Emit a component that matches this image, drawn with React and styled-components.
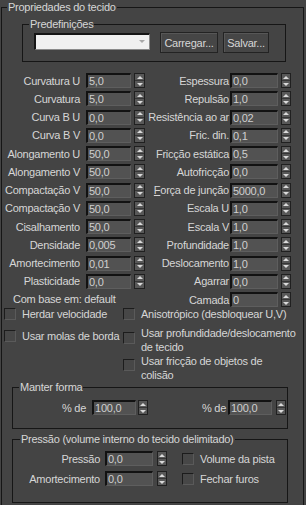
import React from "react";
import styled, { createGlobalStyle } from "styled-components";

const leftFields = [
  ["Curvatura U", "5,0"],
  ["Curvatura", "5,0"],
  ["Curva B U", "0,0"],
  ["Curva B V", "0,0"],
  ["Alongamento U", "50,0"],
  ["Alongamento V", "50,0"],
  ["Compactação V", "50,0"],
  ["Compactação V", "50,0"],
  ["Cisalhamento", "50,0"],
  ["Densidade", "0,005"],
  ["Amortecimento", "0,01"],
  ["Plasticidade", "0,0"],
];

// third item: index of the underlined access-key letter
const rightFields = [
  ["Espessura", "0,0"],
  ["Repulsão", "1,0"],
  ["Resistência ao ar", "0,02"],
  ["Fric. din.", "0,1"],
  ["Fricção estática", "0,5"],
  ["Autofricção", "0,0"],
  ["Força de junção", "5000,0", 0],
  ["Escala U", "1,0"],
  ["Escala V", "1,0"],
  ["Profundidade", "1,0"],
  ["Deslocamento", "1,0"],
  ["Agarrar", "0,0"],
  ["Camada", "0"],
];

function Spin({ gap = 3, w = 10 }) {
  return (
    <Spinner $gap={gap} $w={w}>
      <SpinHalf />
      <SpinHalf $down />
    </Spinner>
  );
}

function LabelText({ text, accel }) {
  if (accel === undefined) return text;
  return (
    <>
      {text.slice(0, accel)}
      <U>{text[accel]}</U>
      {text.slice(accel + 1)}
    </>
  );
}

function Field({ label, accel, value, labelW, gap, inputW, spinGap, spinW }) {
  return (
    <FieldRow>
      <Label $w={labelW} $gap={gap}>
        <span>
          <LabelText text={label} accel={accel} />
        </span>
      </Label>
      <NumInput $w={inputW} readOnly value={value} />
      <Spin gap={spinGap} w={spinW} />
    </FieldRow>
  );
}

function Check({ children, mt, boxTop }) {
  return (
    <CheckItem $mt={mt}>
      <Box $top={boxTop} />
      <span>{children}</span>
    </CheckItem>
  );
}

export default function App() {
  const left = leftFields.map(([l, v], i) => (
    <Field key={"l" + i} label={l} value={v} labelW={78} gap={6} inputW={45} spinGap={3} spinW={11} />
  ));
  const right = rightFields.map(([l, v, a], i) => (
    <Field key={"r" + i} label={l} accel={a} value={v} labelW={83} gap={1} inputW={48} spinGap={3} spinW={10} />
  ));
  const cells = [];
  for (let i = 0; i < 13; i++) {
    cells.push(left[i] || <Note key="note">Com base em: default</Note>);
    cells.push(right[i]);
  }

  return (
    <Panel>
      <GlobalStyle />
      <Group $width={303} $padding="0 0 2px 0">
        <Legend $indent={5}>Propriedades do tecido</Legend>

        <Group $width={264} $margin="3px 0 0 20px" $padding="1px 0 8px 0">
          <Legend $indent={6}>Predefinições</Legend>
          <PresetRow>
            <Dropdown />
            <Button $w={58} $ml={10}>Carregar...</Button>
            <Button $w={46} $ml={5}>Salvar...</Button>
          </PresetRow>
        </Group>

        <FieldGrid>{cells}</FieldGrid>

        <CheckGrid>
          <Check>Herdar velocidade</Check>
          <Check>Anisotrópico (desbloquear U,V)</Check>
          <Check mt={8}>Usar molas de borda</Check>
          <Check mt={5} boxTop={6}>
            Usar profundidade/deslocamento
            <br />
            de tecido
          </Check>
          <span />
          <Check boxTop={5}>
            Usar fricção de objetos de
            <br />
            colisão
          </Check>
        </CheckGrid>

        <Group $width={276} $margin="-2px 0 0 10px" $padding="6px 0 13px 0">
          <Legend $indent={6}>Manter forma</Legend>
          <ShapeRow>
            <FieldRow>
              <Label $gap={6}>% de</Label>
              <NumInput $w={44} readOnly value="100,0" />
              <Spin gap={2} />
            </FieldRow>
            <FieldRow>
              <Label $gap={2}>% de</Label>
              <NumInput $w={44} readOnly value="100,0" />
              <Spin gap={4} />
            </FieldRow>
          </ShapeRow>
        </Group>

        <Group $width={276} $margin="3px 0 0 10px" $padding="5px 0 16px 0">
          <Legend $indent={7}>Pressão (volume interno do tecido delimitado)</Legend>
          <PressRow>
            <Label $w={87} $gap={5}>Pressão</Label>
            <NumInput $w={48} readOnly value="0,0" />
            <Spin gap={4} />
            <Check boxTop={1}>Volume da pista</Check>
          </PressRow>
          <PressRow $mt={5}>
            <Label $w={87} $gap={5}>Amortecimento</Label>
            <NumInput $w={48} readOnly value="0,0" />
            <Spin gap={4} />
            <Check boxTop={1}>Fechar furos</Check>
          </PressRow>
        </Group>
      </Group>
    </Panel>
  );
}

const GlobalStyle = createGlobalStyle`
  * { box-sizing: border-box; }
  body {
    margin: 0;
    background: #444444;
    font-family: "Liberation Sans", Arial, sans-serif;
    font-size: 11px;
    letter-spacing: -0.25px;
    color: #d6d6d6;
  }
`;

const Panel = styled.div`
  width: 306px;
  height: 505px;
  background: #444444;
  overflow: hidden;
  padding-left: 1px;
`;

const Group = styled.fieldset`
  margin: ${(p) => p.$margin || "0"};
  padding: ${(p) => p.$padding || "0"};
  width: ${(p) => p.$width}px;
  border: 1px solid #161616;
  min-width: 0;
`;

const Legend = styled.legend`
  margin-left: ${(p) => p.$indent}px;
  padding: 0 1px;
  line-height: 14px;
  white-space: nowrap;
`;

const U = styled.span`
  text-decoration: underline;
`;

const PresetRow = styled.div`
  display: flex;
  align-items: flex-start;
  padding-left: 11px;
`;

const Dropdown = styled.div`
  position: relative;
  width: 116px;
  height: 17px;
  margin-top: 1px;
  background: #f0f0f0;
  border-top: 2px solid #151515;
  border-left: 2px solid #151515;
  border-right: 1px solid #8a8a8a;
  border-bottom: 1px solid #8a8a8a;

  &::after {
    content: "";
    position: absolute;
    right: 4px;
    top: 5px;
    border-left: 3px solid transparent;
    border-right: 3px solid transparent;
    border-top: 3px solid #a8a8a8;
  }
`;

const Button = styled.button`
  width: ${(p) => p.$w}px;
  height: 21px;
  margin-left: ${(p) => p.$ml}px;
  padding: 0;
  background: #464646;
  border: 1px solid #232323;
  box-shadow: inset 1px 1px 0 #575757;
  color: #d6d6d6;
  font: inherit;
  letter-spacing: inherit;
  white-space: nowrap;
`;

const FieldGrid = styled.div`
  display: grid;
  grid-template-columns: 144px 146px;
  row-gap: 3.25px;
  margin-top: 11px;
`;

const FieldRow = styled.div`
  display: flex;
  align-items: center;
  height: 15px;
`;

const Label = styled.span`
  ${(p) => (p.$w ? `width: ${p.$w}px;` : "")}
  flex: none;
  display: flex;
  justify-content: flex-end;
  white-space: nowrap;
  margin-right: ${(p) => p.$gap}px;
`;

const NumInput = styled.input`
  width: ${(p) => p.$w}px;
  height: 15px;
  flex: none;
  margin: 0;
  padding: 0 0 0 1px;
  background: #525252;
  border-style: solid;
  border-width: 2px 1px 1px 2px;
  border-color: #121212 #5e5e5e #5e5e5e #121212;
  color: #cfcfcf;
  font: inherit;
  letter-spacing: inherit;
  outline: none;
`;

const Spinner = styled.div`
  width: ${(p) => p.$w}px;
  height: 15px;
  flex: none;
  margin-left: ${(p) => p.$gap}px;
  display: flex;
  flex-direction: column;
  border: 1px solid #202020;
  background: #585858;
`;

const SpinHalf = styled.div`
  flex: 1;
  display: flex;
  align-items: center;
  justify-content: center;

  & + & {
    border-top: 1px solid #363636;
  }

  &::after {
    content: "";
    border-left: 3px solid transparent;
    border-right: 3px solid transparent;
    ${(p) =>
      p.$down ? "border-top: 3px solid #dadada;" : "border-bottom: 3px solid #dadada;"}
  }
`;

const Note = styled.div`
  padding-left: 11px;
  line-height: 15px;
  white-space: nowrap;
`;

const CheckGrid = styled.div`
  display: grid;
  grid-template-columns: 119px auto;
  padding-left: 2px;
`;

const CheckItem = styled.label`
  display: flex;
  align-items: flex-start;
  line-height: 14px;
  margin-top: ${(p) => p.$mt || 0}px;
  white-space: nowrap;
`;

const Box = styled.span`
  width: 12px;
  height: 12px;
  flex: none;
  margin-top: ${(p) => (p.$top === undefined ? 1 : p.$top)}px;
  margin-right: 6px;
  background: #474747;
  border: 1px solid;
  border-color: #1c1c1c #5a5a5a #5a5a5a #1c1c1c;
`;

const ShapeRow = styled.div`
  display: flex;
  justify-content: space-between;
  padding: 0 1px 0 49px;
`;

const PressRow = styled.div`
  display: flex;
  align-items: center;
  height: 15px;
  margin-top: ${(p) => p.$mt || 0}px;

  & > label {
    margin-left: 15px;
  }
`;
